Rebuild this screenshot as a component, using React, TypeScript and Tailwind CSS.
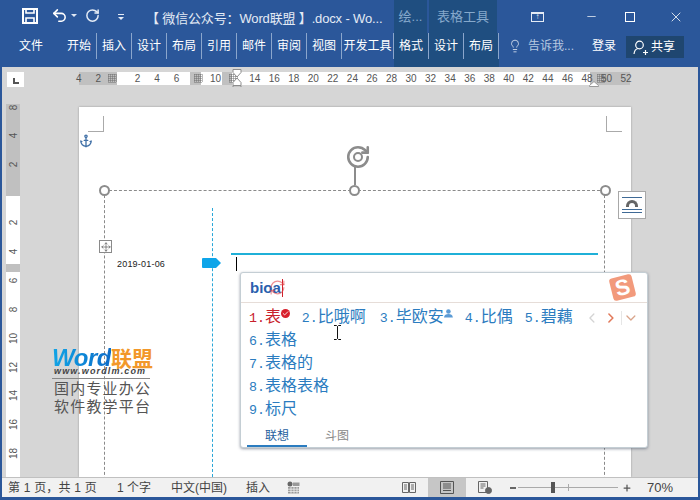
import { Anchor, Check, ChevronDown, ChevronLeft, ChevronRight, Lightbulb, Minus, Move, Plus, RefreshCw, RotateCcw, Undo2, X } from 'lucide-react';

const font = "font-['Liberation_Sans','Noto_Sans_CJK_SC',sans-serif]";

const tabs = [
    { name: '开始', w: 'w-[35px]' },
    { name: '插入', w: 'w-[35px]' },
    { name: '设计', w: 'w-[35px]' },
    { name: '布局', w: 'w-[35px]' },
    { name: '引用', w: 'w-[35px]' },
    { name: '邮件', w: 'w-[35px]' },
    { name: '审阅', w: 'w-[35px]' },
    { name: '视图', w: 'w-[35px]' },
    { name: '开发工具', w: 'w-[52px]' },
];

const contextTabs = ['格式', '设计', '布局'];

const hRuler = ['4', '2', '#', '2', '4', '6', '#', '10', '#', '14', '16', '18', '20', '22', '24', '26', '28', '30', '32', '34', '36', '38', '40', '42', '44', '46', '48', '50', '52'];
const vRuler = ['8', '4', '2', '', '2', '4', '6', '8', '10', '12', '14', '16', '18'];

const candidates = ['6.表格', '7.表格的', '8.表格表格', '9.标尺'];

function GridMark({ className = '' }: { className?: string }) {
    return (
        <svg width="9" height="9" viewBox="0 0 9 9" className={className} aria-hidden="true">
            <path d="M0 1h9M0 3h9M0 5h9M0 7h9M1 0v9M3 0v9M5 0v9M7 0v9" stroke="#666" strokeWidth="0.9" strokeDasharray="1 1" />
        </svg>
    );
}

function Handle({ className }: { className: string }) {
    return <span className={`absolute h-[11px] w-[11px] rounded-full border-2 border-[#8c8c8c] bg-white ${className}`} />;
}

function Candidate({ num, text, active = false }: { num: string; text: string; active?: boolean }) {
    return (
        <span className={`flex shrink-0 items-baseline whitespace-nowrap text-[16px] leading-[23px] ${active ? 'text-[#c8202c]' : 'text-[#2b7cc0]'}`}>
            <span className="font-['Liberation_Mono'] text-[13.3px]">{num}.</span>
            <span>{text}</span>
        </span>
    );
}

function TitleBar() {
    return (
        <div className="flex h-[33px] items-stretch text-[#e4ebf5]">
            <svg width="16" height="16" viewBox="0 0 16 16" className="ml-[22px] mt-[8px]" fill="none" stroke="#fff" strokeWidth="2" aria-hidden="true">
                <path d="M1 1h14v14H1z" />
                <path d="M4 1v4h8V1M4 15v-5h8v5" strokeWidth="1.6" />
            </svg>
            <Undo2 size={17} strokeWidth={2.2} className="ml-[13px] mt-[7px] text-white" />
            <span className="ml-[3px] mt-[14px] h-0 w-0 border-x-[3px] border-t-[3px] border-x-transparent border-t-[#dfe7f3]" />
            <RotateCcw size={15} strokeWidth={2.4} className="ml-[8px] mt-[8px] scale-x-[-1] text-[#e4ebf5]" />
            <span className="ml-[18px] mt-[14px] flex flex-col items-center gap-[2px]">
                <span className="h-px w-[6px] bg-[#e4ebf5]" />
                <span className="h-0 w-0 border-x-[3px] border-t-[3px] border-x-transparent border-t-[#e4ebf5]" />
            </span>
            <div className="ml-[22px] mt-[10px] w-[248px] whitespace-nowrap text-[13px] leading-[18px] tracking-[-0.15px]">【 微信公众号：Word联盟 】.docx - Wo...</div>
            <div className="flex h-[33px] w-[33px] items-center justify-center bg-[#1f4e80] text-[13px] text-[#86a9cc]">绘...</div>
            <div className="ml-[2px] flex h-[33px] w-[68px] items-center justify-center bg-[#1f4e80] text-[13px] text-[#86a9cc]">表格工具</div>
            <div className="relative flex flex-1 items-center">
                <span className="ml-[34px] flex h-[10px] w-[13px] items-center justify-center border border-t-2 border-[#e4ebf5]">
                    <span className="text-[8px] leading-none">↑</span>
                </span>
                <Minus size={13} strokeWidth={1.3} className="ml-[41px] text-white" />
                <span className="ml-[27px] h-[10px] w-[10px] border border-white" />
                <X size={16} strokeWidth={1.2} className="ml-[33px] text-white" />
            </div>
        </div>
    );
}

function TabBar() {
    return (
        <div className="flex h-[34px] items-stretch text-[12px] text-white">
            <div className="flex h-[26px] w-[62px] items-center justify-center">文件</div>
            {tabs.map((tab) => (
                <div key={tab.name} className={`${tab.w} flex h-[26px] items-center justify-center overflow-hidden whitespace-nowrap border-r border-[#8ba6cc]`}>
                    {tab.name}
                </div>
            ))}
            <div className="flex h-[34px] bg-[#1f4e80]">
                {contextTabs.map((tab) => (
                    <div key={tab} className="flex h-[26px] w-[35px] items-center justify-center border-r border-[#8ba6cc]">
                        {tab}
                    </div>
                ))}
            </div>
            <div className="ml-[9px] flex h-[26px] items-center">
                <Lightbulb size={14} strokeWidth={1.4} className="text-[#dfe7f3]" />
                <span className="ml-[6px] text-[#b8c9e0]">告诉我...</span>
                <span className="ml-[18px]">登录</span>
            </div>
            <div className="ml-[10px] mt-[3px] flex h-[22px] w-[58px] items-center gap-[3px] bg-[#1f4670] pl-[7px]">
                <svg width="15" height="15" viewBox="0 0 15 15" fill="none" stroke="#fff" strokeWidth="1.2" aria-hidden="true">
                    <circle cx="6.5" cy="5" r="3.8" />
                    <path d="M1 14c.4-3.4 2.400-5.200 4-5.500M10 12.500h5M12.500 10v5" />
                </svg>
                <span>共享</span>
            </div>
        </div>
    );
}

function HorizontalRuler() {
    return (
        <div className="relative flex h-[20px] bg-[#d6d6d6]">
            <div className="ml-[5px] mt-[5px] flex h-[15px] w-[17px] items-center justify-center bg-white">
                <span className="h-[6px] w-[6px] translate-y-[1px] border-b-2 border-l-2 border-[#555]" />
            </div>
            <div className="relative ml-[55px] mt-[5px] flex h-[13px] w-[553px]">
                <div className="w-[38px] bg-[#c0c0c0]" />
                <div className="w-[73px] bg-white" />
                <div className="w-[11px] bg-[#c0c0c0]" />
                <div className="w-[21px] bg-white" />
                <div className="w-[10px] bg-[#c0c0c0]" />
                <div className="w-[358px] bg-white" />
                <div className="w-[40px] bg-[#c0c0c0]" />
                {/* numbers lie over the margin and text bands */}
                <div className="absolute left-[-10px] top-0 flex h-[13px] text-[10px] leading-[13px] text-[#555]">
                    {hRuler.map((label, i) => (
                        <span key={i} className="flex w-[19.56px] shrink-0 items-center justify-center">
                            {label === '#' ? <GridMark className={i === 2 ? '-translate-x-[5px]' : i === 6 ? 'translate-x-[2px]' : '-translate-x-[2px]'} /> : label}
                        </span>
                    ))}
                </div>
                <GridMark className="absolute left-[518px] top-[2px]" />
            </div>
            <svg width="12" height="27" viewBox="0 0 12 27" className="absolute left-[229px] top-[2px]" aria-hidden="true">
                <path d="M2 .5h8v3L6 8 2 3.500zM6 9l4 4.500v3H2v-3zM2 17h8v7H2z" fill="#fff" stroke="#8c8c8c" />
            </svg>
            <svg width="10" height="6" viewBox="0 0 10 6" className="absolute left-[587px] top-[14px]" aria-hidden="true">
                <path d="M.5 5.500v-1L5 .5l4.500 4v1z" fill="#fff" stroke="#999" />
            </svg>
        </div>
    );
}

function VerticalRuler() {
    return (
        <div className="relative mt-[17px] flex h-[373px] w-[14px] shrink-0 flex-col">
            <div className="h-[92px] bg-[#c0c0c0]" />
            <div className="h-[68px] bg-white" />
            <div className="h-[8px] bg-[#c0c0c0]" />
            <div className="flex-1 bg-white" />
            <div className="absolute left-0 top-[-11.5px] flex w-[14px] flex-col text-[10px] text-[#555]">
                {vRuler.map((label, i) => (
                    <span key={i} className="flex h-[28.9px] shrink-0 -rotate-90 items-center justify-center">
                        {label}
                    </span>
                ))}
            </div>
        </div>
    );
}

function ImePopup() {
    return (
        <div className="absolute left-[161px] top-[165px] h-[176px] w-[408px] rounded-[3px] border border-[#c4ced4] bg-white shadow-[0_1px_3px_rgba(80,90,110,0.6)]">
            <div className="relative flex h-[30px] items-center border-b border-[#e6ddd8] pl-[9px]">
                <span className="text-[15px] font-bold leading-none text-[#2a5fae]">bioa</span>
                <span className="ml-px h-[18px] w-px bg-[#d0202c]" />
                <RefreshCw size={17} strokeWidth={1.6} className="absolute left-[28px] top-[6px] text-[#e2454a]/60" />
                <div className="absolute left-[370px] top-[3px] flex h-[23px] w-[23px] -rotate-[14deg] items-center justify-center rounded-[3px] bg-[#f29a7c] text-[22px] font-bold leading-none text-white">S</div>
            </div>
            <div className="relative px-[8px] pt-[3px]">
                <div className="flex h-[23px] items-center">
                    <Candidate num="1" text="表" active />
                    <span className="mb-[8px] flex h-[9px] w-[9px] items-center justify-center rounded-full bg-[#d8202c]">
                        <Check size={7} strokeWidth={3} className="text-white" />
                    </span>
                    <span className="ml-[12px]"><Candidate num="2" text="比哦啊" /></span>
                    <span className="ml-[14px]"><Candidate num="3" text="毕欧安" /></span>
                    <svg width="9" height="9" viewBox="0 0 9 9" className="mb-[8px]" fill="#5b9bd5" aria-hidden="true">
                        <circle cx="4.5" cy="2.5" r="2.3" />
                        <path d="M0 8.500c.4-2.400 2-3.400 4.500-3.400s4.100 1 4.500 3.400z" />
                    </svg>
                    <span className="ml-[12px]"><Candidate num="4" text="比偶" /></span>
                    <span className="ml-[12px]"><Candidate num="5" text="碧藕" /></span>
                    <ChevronLeft size={16} strokeWidth={2} className="ml-[11px] text-[#d4d4d4]" />
                    <ChevronRight size={16} strokeWidth={2.4} className="ml-[4px] text-[#e2795a]" />
                    <span className="ml-[2px] h-[14px] w-px bg-[#e6e6e6]" />
                    <ChevronDown size={16} strokeWidth={2} className="ml-px text-[#d9a58c]" />
                </div>
                {candidates.map((item) => (
                    <div key={item} className="flex h-[23px] items-center">
                        <Candidate num={item.split('.')[0]} text={item.split('.')[1]} />
                    </div>
                ))}
            </div>
            <div className="mt-[2px] flex h-[24px] items-stretch pl-[6px] text-[12px]">
                <span className="flex w-[60px] items-center justify-center border-b-2 border-[#2b7cc0] pt-[3px] text-[#1f5f9e]">联想</span>
                <span className="ml-[18px] flex w-[24px] items-center justify-center pt-[1px] text-[#888]">斗图</span>
            </div>
        </div>
    );
}

function Page() {
    return (
        <div className="relative ml-[59px] mt-[20px] h-[370px] w-[552px] shrink-0 bg-white shadow-[0_0_2px_rgba(0,0,0,0.3)]">
            <span className="absolute left-[9px] top-[9px] h-[16px] w-[16px] border-b border-r border-[#aaa]" />
            <span className="absolute left-[527px] top-[9px] h-[16px] w-[16px] border-b border-l border-[#aaa]" />
            <Anchor size={14} strokeWidth={2.2} className="absolute left-[0px] top-[27px] text-[#3f6fa6]" />

            {/* selection frame of the text box */}
            <div className="absolute left-[25px] top-[83px] h-[300px] w-[501px] border border-dashed border-[#8a8a8a]" />
            <Handle className="left-[20px] top-[78px]" />
            <Handle className="left-[270px] top-[78px]" />
            <Handle className="left-[521px] top-[78px]" />
            <span className="absolute left-[275px] top-[60px] h-[18px] w-[2px] bg-[#8c8c8c]" />
            <RotateCcw size={26} strokeWidth={2.4} className="absolute left-[266px] top-[37px] scale-x-[-1] text-[#8c8c8c]" />
            <span className="absolute left-[274px] top-[45px] h-[10px] w-[10px] rounded-full border-2 border-[#8c8c8c]" />

            <div className="absolute left-[539px] top-[84px] flex h-[28px] w-[28px] flex-col items-center justify-center gap-[2px] border border-[#a8a8a8] bg-white">
                <span className="h-px w-[20px] bg-[#3f6a96]" />
                <div className="flex w-[20px] items-end justify-center gap-[1px]">
                    <span className="h-[7px] w-[12px] rounded-t-full border-[3px] border-b-0 border-[#666]" />
                </div>
                <span className="h-px w-[20px] bg-[#3f6a96]" />
                <span className="h-px w-[20px] bg-[#3f6a96]" />
            </div>

            <span className="absolute left-[20px] top-[133px] flex h-[13px] w-[13px] items-center justify-center border border-[#8a8a8a] bg-white text-[#444]">
                <Move size={10} strokeWidth={1.4} />
            </span>
            <span className="absolute left-[38px] top-[151px] text-[9px] leading-[12px] tracking-[0.2px] text-[#222]">2019-01-06</span>
            <span className="absolute left-[133px] top-[101px] h-[269px] border-l border-dashed border-[#29a7d8]" />
            <svg width="19" height="10" viewBox="0 0 19 10" className="absolute left-[123px] top-[151px]" aria-hidden="true">
                <path d="M0 1q0-1 1-1h13l5 5-5 5H1q-1 0-1-1z" fill="#0ea5e9" />
            </svg>
            <span className="absolute left-[152px] top-[146px] h-[2px] w-[367px] bg-[#1fb0d8]" />
            <span className="absolute left-[157px] top-[150px] h-[14px] w-px bg-black" />

            <ImePopup />

            <svg width="9" height="15" viewBox="0 0 9 15" className="absolute left-[254px] top-[218px]" aria-hidden="true">
                <path d="M1 .5h2.500l1 1 1-1H8M4.500 1.500v12M1 14.500h2.500l1-1 1 1H8" fill="none" stroke="#111" />
            </svg>

            {/* site watermark over the page corner */}
            <div className="absolute left-[-27px] top-[238px] w-[110px] text-[#555]">
                <div className="-mb-[5px] flex h-[26px] items-center whitespace-nowrap leading-none">
                    <span className="bg-gradient-to-r from-[#12a5e6] to-[#0f6cc8] bg-clip-text text-[24px] font-bold italic tracking-[-0.5px] text-transparent">Word</span>
                    <span className="text-[21px] font-bold text-[#f2982a]">联盟</span>
                </div>
                <div className="whitespace-nowrap pl-[2px] text-[9px] font-bold italic leading-[10px] tracking-[1.15px] text-[#444]">www.wordlm.com</div>
                <div className="mt-[2px] h-px w-[98px] bg-[#888]" />
                <div className="mt-px whitespace-nowrap pl-[2px] text-[15px] leading-[18px] tracking-[1.2px]">国内专业办公</div>
                <div className="whitespace-nowrap pl-[2px] text-[15px] leading-[18px] tracking-[1.2px]">软件教学平台</div>
            </div>
        </div>
    );
}

function StatusBar() {
    return (
        <div className="flex h-[20px] items-center border-t border-[#c0c0c0] bg-[#f1f1f1] text-[12px] text-[#444]">
            <span className="ml-[6px] w-[109px] whitespace-nowrap tracking-[0.2px]">第 1 页，共 1 页</span>
            <span className="w-[54px] whitespace-nowrap">1 个字</span>
            <span className="w-[75px] whitespace-nowrap">中文(中国)</span>
            <span className="w-[41px]">插入</span>
            <svg width="13" height="13" viewBox="0 0 13 13" aria-hidden="true">
                <circle cx="3" cy="3" r="2.500" fill="#666" />
                <path d="M1 6h11v6.500H1zM6 1.500h6.500V5H6z" fill="#999" />
                <path d="M1 8.200h11M1 10.400h11M4 6v6.500M7 6v6.500M10 6v6.500" stroke="#f1f1f1" strokeWidth="0.8" />
            </svg>
            <svg width="14" height="13" viewBox="0 0 14 13" className="ml-[102px]" fill="none" stroke="#666" aria-hidden="true">
                <path d="M.5 1.500h6v10h-6zM7.500 1.500h6v10h-6zM2 4h3M2 6h3M2 8h3M9 4h3M9 6h3M9 8h3" />
            </svg>
            <div className="ml-[12px] flex h-[19px] w-[38px] items-center justify-center bg-[#c6c6c6]">
                <svg width="14" height="13" viewBox="0 0 14 13" fill="none" stroke="#555" aria-hidden="true">
                    <path d="M.5.500h13v12H.5zM3 3h8M3 5h8M3 7h8M3 9.500h8" />
                </svg>
            </div>
            <svg width="14" height="13" viewBox="0 0 14 13" className="ml-[12px]" fill="none" stroke="#666" aria-hidden="true">
                <path d="M.5.500h9v11h-9zM2.500 3h5M2.500 5h5M2.500 7h3" />
                <circle cx="10.500" cy="9.500" r="3" fill="#666" />
            </svg>
            <span className="ml-[18px] h-[2px] w-[6px] bg-[#666]" />
            <div className="relative ml-[2px] h-px w-[100px] bg-[#aaa]">
                <span className="absolute left-[33px] top-[-5px] h-[11px] w-[4px] bg-[#555]" />
                <span className="absolute left-[50px] top-[-3px] h-[7px] w-px bg-[#aaa]" />
            </div>
            <Plus size={10} strokeWidth={3} className="ml-[4px] text-[#555]" />
            <span className="ml-[15px] text-[13px]">70%</span>
        </div>
    );
}

export default function App() {
    return (
        <div className={`flex h-[500px] w-[700px] flex-col overflow-hidden bg-[#2b579a] ${font}`}>
            <TitleBar />
            <TabBar />
            <div className="flex min-h-0 flex-1 flex-col border-x-[2px] border-[#2b579a]">
                <HorizontalRuler />
                <div className="relative flex min-h-0 flex-1 overflow-hidden bg-[#d6d6d6] pl-[4px]">
                    <VerticalRuler />
                    <Page />
                </div>
                <StatusBar />
            </div>
            <div className="h-[3px] bg-[#2b579a]" />
        </div>
    );
}
